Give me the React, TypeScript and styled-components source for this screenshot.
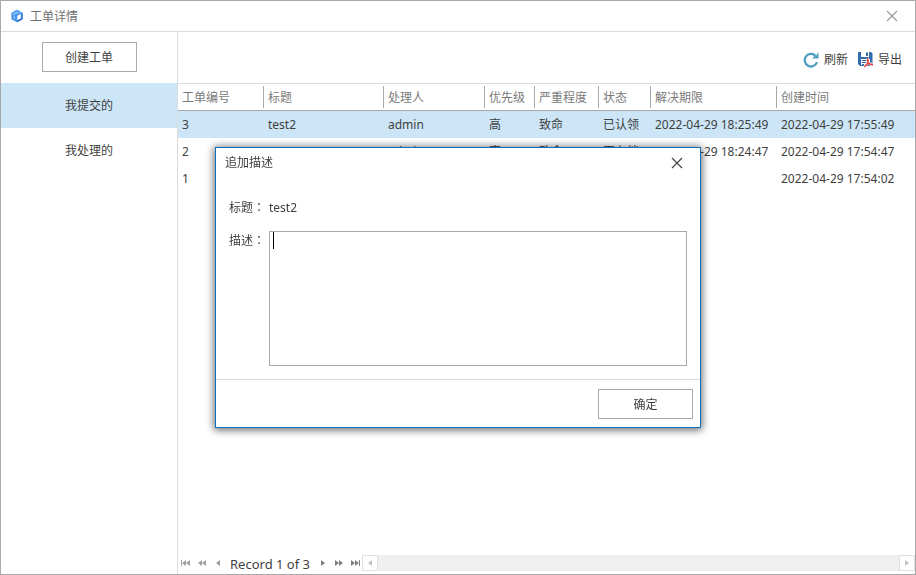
import React, { useState } from "react";
import styled, { createGlobalStyle } from "styled-components";

const GlobalStyle = createGlobalStyle`
  *, *::before, *::after { box-sizing: border-box; }
  body {
    margin: 0;
    color: #3f3f3f;
    background: #fff;
    font: 12px/16px "Noto Sans", "Noto Sans CJK SC", sans-serif;
  }
  button, textarea { font: inherit; color: inherit; }
`;

const Window = styled.div`
  display: flex;
  flex-direction: column;
  min-height: 100vh;
  border: 1px solid #a9a9a9;
`;

const TitleBar = styled.header`
  display: flex;
  align-items: center;
  gap: 6px;
  height: 31px;
  padding: 0 17px 0 9px;
  border-bottom: 1px solid #dcdcdc;
`;

const WindowTitle = styled.h1`
  flex: 1;
  margin: 0;
  padding-top: 2px;
  font-size: 12px;
  font-weight: 400;
  color: #707070;
`;

const IconButton = styled.button<{ $tone: string }>`
  display: flex;
  padding: 0;
  border: 0;
  background: none;
  color: ${(p) => p.$tone};
`;

const Body = styled.div`
  display: flex;
  flex: 1;
`;

const Sidebar = styled.aside`
  display: flex;
  flex-direction: column;
  width: 177px;
  border-right: 1px solid #dcdcdc;
`;

const CreateArea = styled.div`
  display: flex;
  justify-content: center;
  padding: 10px 0 11px;
`;

const OutlineButton = styled.button`
  width: 95px;
  height: 30px;
  padding: 2px 0 0;
  border: 1px solid #a9a9a9;
  background: #fff;
`;

const NavItem = styled.button<{ $active: boolean }>`
  height: 45px;
  padding: 0;
  border: 0;
  background: ${(p) => (p.$active ? "#cde6f7" : "#fff")};
`;

const Main = styled.main`
  display: flex;
  flex: 1;
  flex-direction: column;
  min-width: 0;
`;

const Toolbar = styled.div`
  display: flex;
  align-items: center;
  justify-content: flex-end;
  gap: 9px;
  height: 52px;
  padding: 4px 13px 0 0;
  border-bottom: 1px solid #dcdcdc;
`;

const ToolButton = styled.button`
  display: flex;
  align-items: center;
  gap: 4px;
  padding: 0;
  border: 0;
  background: none;
`;

const TableArea = styled.div`
  flex: 1;
`;

const Table = styled.table`
  width: 100%;
  table-layout: fixed;
  border-collapse: separate;
  border-spacing: 0;
  white-space: nowrap;
`;

const Column = styled.col<{ $width?: number }>`
  width: ${(p) => (p.$width ? `${p.$width}px` : "auto")};
`;

const HeadCell = styled.th`
  height: 27px;
  padding: 0;
  border-bottom: 1px solid #a9a9a9;
  text-align: left;
  font-weight: 400;
  color: #7a7a7a;
`;

const HeadLabel = styled.div<{ $last: boolean }>`
  height: 22px;
  padding-left: 4px;
  line-height: 24px;
  border-right: ${(p) => (p.$last ? "0" : "1px solid #a9a9a9")};
`;

const Row = styled.tr<{ $selected: boolean }>`
  background: ${(p) => (p.$selected ? "#cde6f7" : "#fff")};
`;

const Cell = styled.td`
  height: 27px;
  padding: 0 0 0 4px;
`;

const StatusBar = styled.footer`
  display: flex;
  align-items: center;
  height: 18px;
  margin-bottom: 2px;
  padding-left: 3px;
`;

const PageButtons = styled.div<{ $tone: string }>`
  display: flex;
  gap: 6px;
  color: ${(p) => p.$tone};
`;

const PageButton = styled.button`
  display: flex;
  padding: 0;
  border: 0;
  background: none;
  color: inherit;
`;

const RecordText = styled.span`
  width: 95px;
  padding: 1px 0 0 7px;
  font-size: 13px;
  white-space: nowrap;
`;

const ScrollTrack = styled.div`
  display: flex;
  flex: 1;
  justify-content: space-between;
  height: 16px;
  margin-left: 2px;
  background: #efefef;
`;

const ScrollButton = styled.button`
  display: flex;
  align-items: center;
  justify-content: center;
  width: 16px;
  height: 16px;
  padding: 0;
  border: 1px solid #e0e0e0;
  background: #fff;
  color: #c4c4c4;
`;

const Overlay = styled.div`
  position: fixed;
  inset: 0;
  display: flex;
  align-items: center;
  justify-content: center;
`;

const Dialog = styled.section`
  display: flex;
  flex-direction: column;
  width: 486px;
  max-width: 100%;
  border: 1px solid #106ebe;
  background: #fff;
  box-shadow: 0 1px 8px 1px rgba(0, 0, 0, 0.6);
`;

const DialogHeader = styled.header`
  display: flex;
  align-items: center;
  justify-content: space-between;
  height: 30px;
  padding: 0 17px 0 9px;
`;

const DialogTitle = styled.h2`
  margin: 0;
  font-size: 12px;
  font-weight: 400;
`;

const Fields = styled.div`
  display: grid;
  grid-template-columns: 53px 1fr;
  row-gap: 15px;
  padding: 22px 13px 13px 0;
`;

const FieldLabel = styled.label<{ $drop?: boolean }>`
  padding: ${(p) => (p.$drop ? "2px" : "0")} 0 0 13px;
  white-space: nowrap;
`;

const Colon = styled.span`
  font-family: "Noto Sans CJK TC", sans-serif;
  line-height: 1;
`;

const Editor = styled.div`
  position: relative;
  display: flex;
`;

const TextArea = styled.textarea`
  width: 100%;
  height: 135px;
  padding: 1px 4px;
  border: 1px solid #a9a9a9;
  outline: 0;
  resize: none;
  caret-color: transparent;
`;

const Caret = styled.span`
  position: absolute;
  top: 1px;
  left: 4px;
  width: 1px;
  height: 17px;
  background: #000;
`;

const DialogFooter = styled.footer`
  display: flex;
  justify-content: flex-end;
  padding: 9px 7px 8px;
  border-top: 1px solid #dcdcdc;
`;

const CloseIcon = () => (
  <svg width="12" height="12" viewBox="0 0 12 12" fill="none" stroke="currentColor" strokeWidth="1.2">
    <path d="M1 1l10 10M11 1L1 11" />
  </svg>
);

const LogoIcon = () => (
  <svg width="14" height="14" viewBox="0 0 14 14">
    <path d="M7 .8L12.600 4v6.300L7 13.300 1.400 10.300V4z" fill="#4794ec" />
    <path d="M7 .8L12.600 4l-1.300 1L7 3 2.700 5.200 1.400 4z" fill="#5ba6f6" />
    <path d="M12.600 4v6.300L7 13.300v-1.500l4.300-2.300V5z" fill="#2a6cc8" />
    <path d="M7.300 6.800L10.900 5v4.300l-3.600 2z" fill="#fff" />
    <path d="M3.200 5.600L7 3.700l1.500.8M4.200 6.500v3.300" stroke="#b9dafb" strokeWidth=".9" fill="none" />
  </svg>
);

const RefreshIcon = () => (
  <svg width="17" height="17" viewBox="0 0 17 17">
    <path d="M14 11.200A6.300 6.300 0 1 1 12.600 4.800" fill="none" stroke="#4f9fc0" strokeWidth="2.300" />
    <path d="M15.500 1v6.500H9l2.300-2.300 2-.7z" fill="#4f9fc0" />
  </svg>
);

const ExportIcon = () => (
  <svg width="17" height="17" viewBox="0 0 17 17">
    <path d="M1 1h13l1.500 1.500V15H3l-2-2z" fill="#336cad" />
    <path d="M4 1h8v5H4z" fill="#fff" />
    <path d="M9 1.500h2V5H9z" fill="#336cad" />
    <path d="M4 8h9v6H4z" fill="#fff" />
    <path d="M5 9.500h5M5 11.500h4M5 13.500h2" stroke="#336cad" />
    <path d="M10.500 7c1.600 3 0 6.500-3.200 9M10.500 8c0 3 2 5.500 5.500 6.500M8 14c2-1.500 5-2 8-.5" fill="none" stroke="#fff" strokeWidth="2.400" />
    <path d="M10.500 7c1.600 3 0 6.500-3.200 9M10.500 8c0 3 2 5.500 5.500 6M8 14.500c2-1.500 5-2 8-1" fill="none" stroke="#e84545" strokeWidth="1.400" />
  </svg>
);

type ArrowProps = { count: number; bar?: boolean; back?: boolean };

const Arrow = ({ count, bar, back }: ArrowProps) => (
  <svg width="10" height="8" viewBox="0 0 10 8" fill="currentColor">
    <g transform={back ? "translate(10 0) scale(-1 1)" : undefined}>
      {count === 1 && <path d="M3 1l4 3-4 3z" />}
      {count === 2 && <path d="M1 1l4 3-4 3zM5 1l4 3-4 3z" />}
      {bar && <path d="M9 1h1v6H9z" />}
    </g>
  </svg>
);

const columns = [
  { title: "工单编号", width: 86 },
  { title: "标题", width: 120 },
  { title: "处理人", width: 101 },
  { title: "优先级", width: 50 },
  { title: "严重程度", width: 64 },
  { title: "状态", width: 52 },
  { title: "解决期限", width: 126 },
  { title: "创建时间" },
];

const rows = [
  ["3", "test2", "admin", "高", "致命", "已认领", "2022-04-29 18:25:49", "2022-04-29 17:55:49"],
  ["2", "test1", "admin", "高", "致命", "再存档", "2022-04-29 18:24:47", "2022-04-29 17:54:47"],
  ["1", "", "", "", "", "", "", "2022-04-29 17:54:02"],
];

const navItems = ["我提交的", "我处理的"];

export default function App() {
  const [activeNav, setActiveNav] = useState(0);
  const [selected, setSelected] = useState(0);
  const [description, setDescription] = useState("");

  return (
    <>
      <GlobalStyle />
      <Window>
        <TitleBar>
          <LogoIcon />
          <WindowTitle>工单详情</WindowTitle>
          <IconButton $tone="#9a9a9a" aria-label="关闭窗口"><CloseIcon /></IconButton>
        </TitleBar>
        <Body>
          <Sidebar>
            <CreateArea><OutlineButton>创建工单</OutlineButton></CreateArea>
            {navItems.map((item, i) => (
              <NavItem key={item} $active={i === activeNav} onClick={() => setActiveNav(i)}>{item}</NavItem>
            ))}
          </Sidebar>
          <Main>
            <Toolbar>
              <ToolButton><RefreshIcon />刷新</ToolButton>
              <ToolButton><ExportIcon />导出</ToolButton>
            </Toolbar>
            <TableArea>
              <Table>
                <colgroup>
                  {columns.map((c) => <Column key={c.title} $width={c.width} />)}
                </colgroup>
                <thead>
                  <tr>
                    {columns.map((c, i) => (
                      <HeadCell key={c.title} scope="col">
                        <HeadLabel $last={i === columns.length - 1}>{c.title}</HeadLabel>
                      </HeadCell>
                    ))}
                  </tr>
                </thead>
                <tbody>
                  {rows.map((row, r) => (
                    <Row key={row[0]} $selected={r === selected} onClick={() => setSelected(r)}>
                      {row.map((value, c) => <Cell key={c}>{value}</Cell>)}
                    </Row>
                  ))}
                </tbody>
              </Table>
            </TableArea>
            <StatusBar>
              <PageButtons $tone="#a0a0a0">
                <PageButton aria-label="第一条"><Arrow count={2} bar back /></PageButton>
                <PageButton aria-label="上一页"><Arrow count={2} back /></PageButton>
                <PageButton aria-label="上一条"><Arrow count={1} back /></PageButton>
              </PageButtons>
              <RecordText>Record 1 of 3</RecordText>
              <PageButtons $tone="#808080">
                <PageButton aria-label="下一条"><Arrow count={1} /></PageButton>
                <PageButton aria-label="下一页"><Arrow count={2} /></PageButton>
                <PageButton aria-label="最后一条"><Arrow count={2} bar /></PageButton>
              </PageButtons>
              <ScrollTrack>
                <ScrollButton aria-label="向左滚动"><Arrow count={1} back /></ScrollButton>
                <ScrollButton aria-label="向右滚动"><Arrow count={1} /></ScrollButton>
              </ScrollTrack>
            </StatusBar>
          </Main>
        </Body>
      </Window>
      <Overlay>
        <Dialog role="dialog" aria-labelledby="dialog-title">
          <DialogHeader>
            <DialogTitle id="dialog-title">追加描述</DialogTitle>
            <IconButton $tone="#444" aria-label="关闭"><CloseIcon /></IconButton>
          </DialogHeader>
          <Fields>
            <FieldLabel as="span">标题<Colon lang="zh-TW">：</Colon></FieldLabel>
            <span>test2</span>
            <FieldLabel $drop htmlFor="description">描述<Colon lang="zh-TW">：</Colon></FieldLabel>
            <Editor>
              <TextArea id="description" value={description} onChange={(e) => setDescription(e.target.value)} />
              {description === "" && <Caret />}
            </Editor>
          </Fields>
          <DialogFooter><OutlineButton>确定</OutlineButton></DialogFooter>
        </Dialog>
      </Overlay>
    </>
  );
}
